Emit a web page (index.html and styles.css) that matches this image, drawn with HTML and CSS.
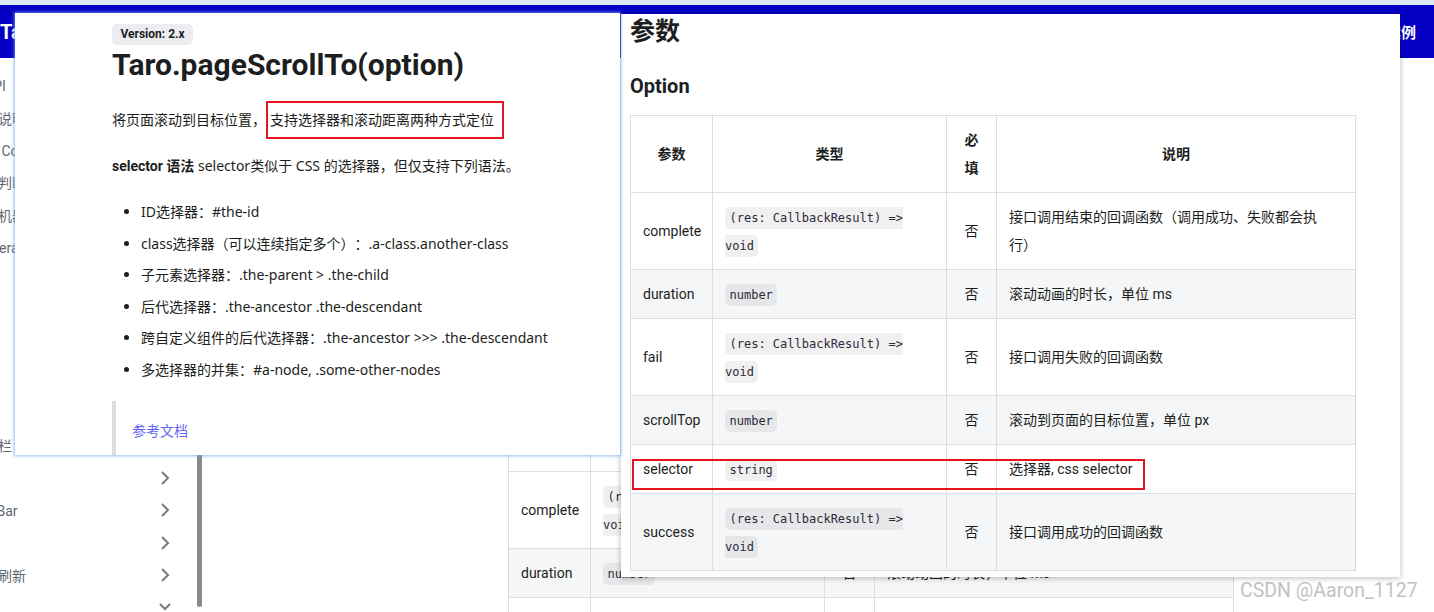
FILE: index.html
```html
<!DOCTYPE html>
<html lang="zh-CN">
<head>
<meta charset="utf-8">
<title>Taro.pageScrollTo</title>
<link rel="stylesheet" href="styles.css">
</head>
<body>
<div class="page">
  <div class="topstrip"></div>
  <header class="navbar">
    <span class="brand">Taro</span>
    <span class="nav-link">案例</span>
  </header>
  <div class="main">
    <aside class="sidebar">
      <nav class="menu">
        <div class="item"><span class="label">小程序接口API</span></div>
        <div class="item"><span class="label">开发需要注意说明</span></div>
        <div class="item"><span class="label">全局配置文件 Components</span></div>
        <div class="item"><span class="label">页面路由能力判断</span></div>
        <div class="item"><span class="label">获取设备信息机器码</span></div>
        <div class="item"><span class="label">拍照相机Camera</span></div>
        <div class="item"><span class="label">网络</span></div>
        <div class="item"><span class="label">媒体</span></div>
        <div class="item"><span class="label">位置</span></div>
        <div class="item"><span class="label">界面</span></div>
        <div class="item"><span class="label">交互</span></div>
        <div class="item sep"><span class="label">顶部导航标题栏</span></div>
        <div class="item"><span class="label">窗口</span><svg class="chev" width="10" height="16" viewBox="0 0 10 16"><polyline points="2,2 8,8 2,14"/></svg></div>
        <div class="item"><span class="label">页面设置 TabBar</span><svg class="chev" width="10" height="16" viewBox="0 0 10 16"><polyline points="2,2 8,8 2,14"/></svg></div>
        <div class="item"><span class="label">动画</span><svg class="chev" width="10" height="16" viewBox="0 0 10 16"><polyline points="2,2 8,8 2,14"/></svg></div>
        <div class="item"><span class="label">页面内容下拉刷新</span><svg class="chev" width="10" height="16" viewBox="0 0 10 16"><polyline points="2,2 8,8 2,14"/></svg></div>
        <div class="item"><span class="label">滚动</span><svg class="chev down" width="14" height="10" viewBox="0 0 14 10"><polyline points="2,2 7,7 12,2"/></svg></div>
      </nav>
      <div class="scroll-track"><div class="scroll-thumb"></div></div>
    </aside>
    <main class="content">
      <table class="params">
        <colgroup><col class="c1"><col class="c2"><col class="c3"><col class="c4"></colgroup>
        <thead>
          <tr><th>参数</th><th>类型</th><th>必填</th><th>说明</th></tr>
        </thead>
        <tbody>
          <tr><td>complete</td><td><code>(res: CallbackResult) =&gt; void</code></td><td class="center">否</td><td>接口调用结束的回调函数（调用成功、失败都会执行）</td></tr>
          <tr><td>duration</td><td><code>number</code></td><td class="center">否</td><td>滚动动画的时长，单位 ms</td></tr>
          <tr><td>fail</td><td><code>(res: CallbackResult) =&gt; void</code></td><td class="center">否</td><td>接口调用失败的回调函数</td></tr>
        </tbody>
      </table>
    </main>
  </div>
  <div class="watermark">CSDN @Aaron_1127</div>
</div>

<section class="shot shot-left">
  <span class="badge">Version: 2.x</span>
  <h1 class="title">Taro.pageScrollTo(option)</h1>
  <p class="para">将页面滚动到目标位置，<span class="mark">支持选择器和滚动距离两种方式定位</span></p>
  <p class="para"><strong>selector 语法</strong> selector类似于 CSS 的选择器，但仅支持下列语法。</p>
  <ul class="list">
    <li>ID选择器：#the-id</li>
    <li>class选择器（可以连续指定多个）：.a-class.another-class</li>
    <li>子元素选择器：.the-parent &gt; .the-child</li>
    <li>后代选择器：.the-ancestor .the-descendant</li>
    <li>跨自定义组件的后代选择器：.the-ancestor &gt;&gt;&gt; .the-descendant</li>
    <li>多选择器的并集：#a-node, .some-other-nodes</li>
  </ul>
  <blockquote class="quote"><a class="link">参考文档</a></blockquote>
</section>

<section class="shot shot-right">
  <h2 class="h2">参数</h2>
  <h3 class="h3">Option</h3>
  <table class="params">
    <colgroup><col class="c1"><col class="c2"><col class="c3"><col class="c4"></colgroup>
    <thead>
      <tr><th>参数</th><th>类型</th><th>必填</th><th>说明</th></tr>
    </thead>
    <tbody>
      <tr><td>complete</td><td><code>(res: CallbackResult) =&gt; void</code></td><td class="center">否</td><td>接口调用结束的回调函数（调用成功、失败都会执行）</td></tr>
      <tr><td>duration</td><td><code>number</code></td><td class="center">否</td><td>滚动动画的时长，单位 ms</td></tr>
      <tr><td>fail</td><td><code>(res: CallbackResult) =&gt; void</code></td><td class="center">否</td><td>接口调用失败的回调函数</td></tr>
      <tr><td>scrollTop</td><td><code>number</code></td><td class="center">否</td><td>滚动到页面的目标位置，单位 px</td></tr>
      <tr><td>selector</td><td><code>string</code></td><td class="center">否</td><td>选择器, css selector</td></tr>
      <tr><td>success</td><td><code>(res: CallbackResult) =&gt; void</code></td><td class="center">否</td><td>接口调用成功的回调函数</td></tr>
    </tbody>
  </table>
  <div class="annot"></div>
</section>
</body>
</html>
```
FILE: styles.css
```css
* { box-sizing: border-box; }
html, body { margin: 0; padding: 0; }
body {
  width: 1434px;
  height: 612px;
  overflow: hidden;
  position: relative;
  background: #fff;
  font-family: Roboto, "Noto Sans CJK SC", sans-serif;
  font-size: 14px;
  color: #1c1e21;
  text-spacing-trim: space-all;
}

.page { width: 1434px; height: 612px; display: flex; flex-direction: column; overflow: hidden; }
.topstrip { height: 5px; background: #dde9f7; flex: none; }
.navbar {
  height: 53px; flex: none;
  background: #0500c4;
  display: flex; align-items: center; justify-content: space-between;
  padding: 0 18px 0 0;
  color: #fff; font-weight: 700;
}
.brand { font-size: 20px; }
.nav-link { font-size: 15px; }

.main { flex: 1; display: flex; min-height: 0; }
.sidebar { flex: 0 0 305px; margin-left: -100px; display: flex; }
.menu { flex: 1; padding-top: 11px; color: #606770; }
.item {
  height: 32.4px;
  display: flex; align-items: center; justify-content: space-between;
  padding: 0 27px 0 14px;
  white-space: nowrap;
}
.item.sep { margin-top: 4px; }
.chev { fill: none; stroke: #7a7a7a; stroke-width: 2; flex: none; }
.chev.down { margin-right: -2px; }
.scroll-track { width: 5px; margin-right: 3px; display: flex; flex-direction: column; justify-content: flex-end; }
.scroll-thumb { height: 170px; margin-bottom: 5px; background: #8a8a8a; border-radius: 3px; }

.content { flex: 1; padding: 336px 0 0 303px; }

/* shared table */
.params {
  border-collapse: collapse;
  table-layout: fixed;
  width: 726px;
  font-size: 14px;
  line-height: 28px;
  color: #1c1e21;
}
.params .c1 { width: 82px; }
.params .c2 { width: 234px; }
.params .c3 { width: 50px; }
.params .c4 { width: 359px; }
.params th, .params td { border: 1px solid #dadde1; padding: 10px 12px; vertical-align: middle; }
.params th { font-weight: 600; text-align: center; }
.params tbody tr:nth-child(2n) { background: #f5f6f7; }
.params .center { text-align: center; }
.params code {
  font-family: "DejaVu Sans Mono", monospace;
  font-size: 12px;
  line-height: 1;
  background: rgba(0, 0, 0, 0.06);
  padding: 4px 4.5px;
  border-radius: 5px;
  color: #2e2a3a;
}

.watermark {
  position: absolute; left: 1240px; top: 579px;
  font-size: 19.5px; color: #c2c2c2; white-space: nowrap;
}

/* screenshot panels */
.shot { position: absolute; background: #fff; overflow: hidden; }
.shot-left {
  left: 15px; top: 13px; width: 605px; height: 442px;
  padding: 10px 0 0 97px;
  font-family: "Noto Sans", "Noto Sans CJK SC", sans-serif;
  box-shadow: 0 0 3px 1px rgba(110, 165, 235, 0.75);
  z-index: 2;
}
.shot-right {
  left: 621px; top: 14px; width: 779px; height: 563px;
  padding: 0 0 0 9px;
  box-shadow: 0 1px 6px rgba(0, 0, 0, 0.28);
  z-index: 1;
}

.badge {
  display: inline-block;
  height: 21px; line-height: 21px;
  padding: 0 8.5px;
  background: #ebedf0; border-radius: 5px;
  font-family: Roboto, sans-serif;
  font-size: 12px; font-weight: 700;
}
.title {
  margin: 0 0 23px;
  font-family: Roboto, sans-serif;
  font-size: 30px; line-height: 40px; font-weight: 700;
}
.para { margin: 0 0 22px; line-height: 24px; }
.para strong { font-family: Roboto, "Noto Sans CJK SC", sans-serif; font-weight: 700; }
.mark { border: 2px solid #e3161f; padding: 7px 8px 8px 2px; }
.list { margin: 0; padding-left: 29px; }
.list li { line-height: 24px; margin-bottom: 7.6px; }
.quote { margin: 19px 0 0; border-left: 4px solid #dadde1; padding: 18px 16px; line-height: 24px; }
.link { color: #6565f5; }

.h2 { margin: 0; font-size: 25px; line-height: 36px; font-weight: 700; }
.h3 { margin: 22px 0 15px; font-size: 20px; line-height: 28px; font-weight: 700; }
.annot {
  position: absolute; left: 11px; top: 445px; width: 513px; height: 31px;
  border: 2px solid #e3161f;
}
```
